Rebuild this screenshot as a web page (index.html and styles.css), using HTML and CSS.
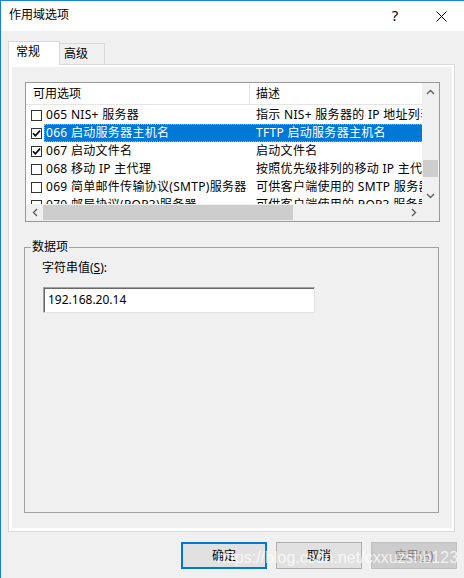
FILE: index.html
```html
<!DOCTYPE html>
<html lang="zh-CN">
<head>
<meta charset="utf-8">
<title>作用域选项</title>
<link rel="stylesheet" href="styles.css">
</head>
<body>
<div class="window">
  <div class="titlebar">
    <span class="title">作用域选项</span>
    <span class="tb-btn help">?</span>
    <span class="tb-btn close"><svg width="11" height="11" viewBox="0 0 11 11"><path d="M0.5 0.5L10.5 10.5M10.5 0.5L0.5 10.5" stroke="#000" stroke-width="1" fill="none"/></svg></span>
  </div>
  <div class="client">
    <div class="tabs">
      <div class="tab active">常规</div>
      <div class="tab inactive">高级</div>
    </div>
    <div class="panel">
      <div class="list">
        <div class="view">
          <div class="header"><div class="h1">可用选项</div><div class="h2">描述</div></div>
          <div class="rows">
            <div class="row"><div class="cb-cell"><span class="cb"></span></div><div class="cells"><div class="c1">065 NIS+ 服务器</div><div class="c2">指示 NIS+ 服务器的 IP 地址列表</div></div></div>
            <div class="row sel"><div class="cb-cell"><span class="cb"><svg width="9" height="9" viewBox="0 0 9 9"><path d="M1 4.2L3.4 6.8L8 1.6" fill="none" stroke="#000" stroke-width="1.6"/></svg></span></div><div class="cells"><div class="c1">066 启动服务器主机名</div><div class="c2">TFTP 启动服务器主机名</div></div></div>
            <div class="row"><div class="cb-cell"><span class="cb"><svg width="9" height="9" viewBox="0 0 9 9"><path d="M1 4.2L3.4 6.8L8 1.6" fill="none" stroke="#000" stroke-width="1.6"/></svg></span></div><div class="cells"><div class="c1">067 启动文件名</div><div class="c2">启动文件名</div></div></div>
            <div class="row"><div class="cb-cell"><span class="cb"></span></div><div class="cells"><div class="c1">068 移动 IP 主代理</div><div class="c2">按照优先级排列的移动 IP 主代理</div></div></div>
            <div class="row"><div class="cb-cell"><span class="cb"></span></div><div class="cells"><div class="c1">069 简单邮件传输协议(SMTP)服务器</div><div class="c2">可供客户端使用的 SMTP 服务器</div></div></div>
            <div class="row"><div class="cb-cell"><span class="cb"></span></div><div class="cells"><div class="c1">070 邮局协议(POP3)服务器</div><div class="c2">可供客户端使用的 POP3 服务器</div></div></div>
          </div>
        </div>
        <div class="vscroll">
          <div class="sb-btn"><svg width="9" height="6" viewBox="0 0 9 6"><path d="M1 5L4.5 1.5L8 5" fill="none" stroke="#606060" stroke-width="1.4"/></svg></div>
          <div class="vtrack"><div class="vthumb"></div></div>
          <div class="sb-btn"><svg width="9" height="6" viewBox="0 0 9 6"><path d="M1 1L4.5 4.5L8 1" fill="none" stroke="#606060" stroke-width="1.4"/></svg></div>
        </div>
        <div class="hscroll">
          <div class="sb-btn"><svg width="6" height="9" viewBox="0 0 6 9"><path d="M5 1L1.5 4.5L5 8" fill="none" stroke="#606060" stroke-width="1.4"/></svg></div>
          <div class="htrack"><div class="hthumb"></div></div>
          <div class="sb-btn"><svg width="6" height="9" viewBox="0 0 6 9"><path d="M1 1L4.5 4.5L1 8" fill="none" stroke="#606060" stroke-width="1.4"/></svg></div>
        </div>
        <div class="corner"></div>
      </div>
      <fieldset class="group">
        <legend>数据项</legend>
        <div class="group-body">
          <div class="field-label">字符串值(<u>S</u>):</div>
          <div class="textbox">192.168.20.14</div>
        </div>
      </fieldset>
    </div>
    <div class="buttons">
      <button class="btn default">确定</button>
      <button class="btn">取消</button>
      <button class="btn" disabled>应用(<u>A</u>)</button>
    </div>
  </div>
  <div class="watermark">https://blog.csdn.net/cxxuzshb123</div>
</div>
</body>
</html>
```
FILE: styles.css
```css
* { box-sizing: border-box; }
html, body { margin: 0; padding: 0; background: #f0f0f0; }
body {
  font-family: "Noto Sans", "Noto Sans CJK SC", sans-serif;
  font-size: 12px;
  color: #000;
}
.window {
  position: relative;
  width: 464px;
  height: 578px;
  border-left: 1px solid #1883d7;
  border-top: 1px solid #1883d7;
  background: #f0f0f0;
  overflow: hidden;
}
.titlebar {
  display: flex;
  align-items: center;
  height: 30px;
  background: #fff;
}
.title {
  flex: 1;
  padding-left: 8px;
  line-height: 16px;
  padding-bottom: 2px;
}
.tb-btn {
  width: 46px;
  height: 30px;
  display: flex;
  align-items: center;
  justify-content: center;
}
.help {
  font-size: 15px;
  line-height: 16px;
  padding-bottom: 2px;
}
.client {
  padding: 10px 9px 0 7px;
}
.tabs {
  display: flex;
  align-items: flex-end;
  height: 23px;
}
.tab {
  border: 1px solid #d9d9d9;
  border-bottom: none;
  line-height: 16px;
  white-space: nowrap;
}
.tab.active {
  position: relative;
  z-index: 1;
  background: #fff;
  width: 52px;
  height: 24px;
  padding: 2px 0 0 7px;
  margin-bottom: -1px;
}
.tab.inactive {
  width: 46px;
  height: 21px;
  padding: 2px 0 0 4px;
  margin-left: -1px;
  background: #f0f0f0;
}
.panel {
  height: 468px;
  border: 1px solid #d9d9d9;
  background: #f0f0f0;
  box-shadow: inset 3px 2px 0 #fff, inset -2px -3px 0 #fff;
  padding: 17px 14px 18px 16px;
  display: flex;
  flex-direction: column;
}
.list {
  flex: none;
  height: 140px;
  border: 1px solid #999;
  background: #fff;
  display: grid;
  grid-template-columns: 1fr 17px;
  grid-template-rows: 1fr 17px;
}
.view {
  overflow: hidden;
  min-width: 0;
  min-height: 0;
}
.header {
  display: flex;
  height: 22px;
  border-bottom: 1px solid #e5e5e5;
  line-height: 21px;
  white-space: nowrap;
}
.h1 {
  flex: none;
  width: 224px;
  padding-left: 7px;
  border-right: 1px solid #e5e5e5;
}
.h2 { padding-left: 6px; }
.rows { margin-top: 1px; }
.row {
  display: flex;
  height: 18px;
  line-height: 18px;
  white-space: nowrap;
  letter-spacing: 0.3px;
}
.cb-cell {
  flex: none;
  width: 18px;
  padding-left: 5px;
  display: flex;
  align-items: center;
}
.cb {
  width: 11px;
  height: 11px;
  border: 1px solid #333;
  background: #fff;
  display: flex;
}
.cells { display: flex; flex: none; }
.c1 {
  flex: none;
  width: 206px;
  padding-left: 2px;
  overflow: hidden;
}
.c2 {
  flex: none;
  width: 320px;
  padding-left: 6px;
  overflow: hidden;
}
.row.sel .cells {
  background: #0078d7;
  color: #fff;
  outline: 1px dotted #f39b3a;
  outline-offset: -1px;
}
.vscroll {
  background: #f0f0f0;
  display: flex;
  flex-direction: column;
}
.sb-btn {
  flex: none;
  width: 17px;
  height: 17px;
  display: flex;
  align-items: center;
  justify-content: center;
}
.vtrack { flex: 1; padding-top: 60px; }
.vthumb { height: 17px; margin: 0 1px; background: #cdcdcd; }
.hscroll {
  background: #f0f0f0;
  display: flex;
  min-width: 0;
}
.htrack { flex: 1; padding-top: 1px; }
.hthumb { width: 250px; height: 15px; background: #cdcdcd; }
.corner { background: #f0f0f0; }
.group {
  flex: 1;
  margin: 17px 0 0 -1px;
  width: 415px;
  min-width: 0;
  padding: 0;
  border: 1px solid #a0a0a0;
}
.group legend {
  padding: 0 1px;
  margin-left: 6px;
  line-height: 16px;
}
.group-body { padding: 5px 0 0 17px; }
.field-label { line-height: 16px; }
.textbox {
  margin: 11px 0 0 1px;
  width: 272px;
  height: 26px;
  background: #fff;
  border: 1px solid;
  border-color: #a0a0a0 #e3e3e3 #e3e3e3 #a0a0a0;
  box-shadow: inset 1px 1px 0 #696969;
  padding-left: 4px;
  line-height: 24px;
}
.buttons {
  display: flex;
  justify-content: flex-end;
  gap: 9px;
  margin: 10px -2px 0 0;
}
.btn {
  width: 86px;
  height: 27px;
  font-family: inherit;
  font-size: 12px;
  line-height: 16px;
  color: #000;
  background: #e1e1e1;
  border: 1px solid #adadad;
  padding: 0;
}
.btn.default { border: 2px solid #0078d7; }
.btn:disabled {
  background: #cccccc;
  border-color: #bfbfbf;
  color: #838383;
}
.watermark {
  position: absolute;
  left: 216px;
  top: 548px;
  font-family: "Liberation Sans", Arial, sans-serif;
  font-size: 16px;
  line-height: 18px;
  color: rgba(255, 255, 255, 0.75);
  white-space: nowrap;
  pointer-events: none;
}
```
